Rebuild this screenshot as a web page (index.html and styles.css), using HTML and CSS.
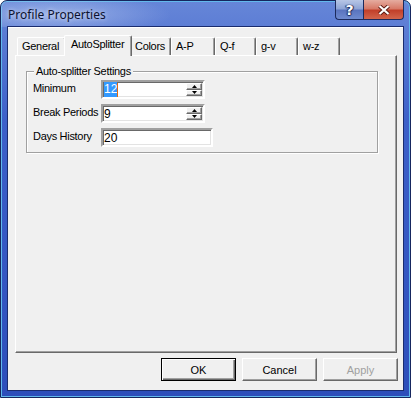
FILE: index.html
```html
<html>
  <head>
    <meta http-equiv="Content-Type" content="text/html; charset=utf-8" />
    <title>Profile Properties</title>
    <link rel="stylesheet" href="styles.css">
  </head>
  <body>
    <div class="window">
      <div class="titlebar">
        <span class="title">Profile Properties</span>
        <div class="capbuttons">
          <div class="capbtn help">?</div>
          <div class="capbtn close">
            <svg width="12" height="10" viewBox="0 0 12 10">
              <path d="M1.5 1 L10.5 9 M10.5 1 L1.5 9" stroke="#5a1a12" stroke-width="4" fill="none" />
              <path d="M1.5 1 L10.5 9 M10.5 1 L1.5 9" stroke="#fff" stroke-width="2.2" fill="none" />
            </svg>
          </div>
        </div>
      </div>
      <div class="client">
        <div class="tabs">
          <div class="tab t-general">General</div>
          <div class="tab t-auto selected">AutoSplitter</div>
          <div class="tab t-colors">Colors</div>
          <div class="tab t-ap">A-P</div>
          <div class="tab t-qf">Q-f</div>
          <div class="tab t-gv">g-v</div>
          <div class="tab t-wz">w-z</div>
        </div>
        <div class="panel">
          <fieldset class="group">
            <legend>Auto-splitter Settings</legend>
            <div class="row">
              <span class="lbl">Minimum</span>
              <div class="field spin">
                <span class="val"><span class="sel">12</span><span class="caret"></span></span>
                <div class="spinner">
                  <div class="sbtn"><svg width="5" height="3" viewBox="0 0 5 3"><polygon points="2.5,0 5,3 0,3" fill="#000" /></svg></div>
                  <div class="sbtn"><svg width="5" height="3" viewBox="0 0 5 3"><polygon points="0,0 5,0 2.5,3" fill="#000" /></svg></div>
                </div>
              </div>
            </div>
            <div class="row">
              <span class="lbl">Break Periods</span>
              <div class="field spin">
                <span class="val">9</span>
                <div class="spinner">
                  <div class="sbtn"><svg width="5" height="3" viewBox="0 0 5 3"><polygon points="2.5,0 5,3 0,3" fill="#000" /></svg></div>
                  <div class="sbtn"><svg width="5" height="3" viewBox="0 0 5 3"><polygon points="0,0 5,0 2.5,3" fill="#000" /></svg></div>
                </div>
              </div>
            </div>
            <div class="row">
              <span class="lbl">Days History</span>
              <div class="field plain">
                <span class="val">20</span>
              </div>
            </div>
          </fieldset>
        </div>
        <div class="buttons">
          <div class="button default">OK</div>
          <div class="button">Cancel</div>
          <div class="button disabled">Apply</div>
        </div>
      </div>
    </div>
  </body>
</html>
```

FILE: styles.css
```css
body {
    margin: 0;
    font-family: "Liberation Sans", Arial, sans-serif;
    font-size: 11px;
    background: #fff;
}

.window {
    width: 411px;
    height: 398px;
    box-sizing: border-box;
    display: flex;
    flex-direction: column;
    border: 1px solid #16265e;
    border-radius: 7px 7px 0 0;
    background: linear-gradient(180deg, #6686d8 0%, #3d60c9 30%, #3456c2 70%, #2d4eba 100%);
    box-shadow: inset 0 0 0 1px #62b8ec;
}

.titlebar {
    height: 26px;
    display: flex;
    justify-content: space-between;
    align-items: flex-start;
    background: radial-gradient(ellipse 120px 22px at 50px 14px, rgba(200, 215, 245, 0.55), rgba(200, 215, 245, 0));
    border-radius: 6px 6px 0 0;
}

.title {
    font-family: "Noto Sans", "Open Sans", sans-serif;
    font-size: 12px;
    color: #0c1230;
    margin: 5px 0 0 7px;
    text-shadow: 0 0 4px rgba(255, 255, 255, 0.7);
}

.capbuttons {
    display: flex;
    margin-right: 6px;
    margin-top: -1px;
}

.capbtn {
    height: 20px;
    box-sizing: border-box;
    display: flex;
    align-items: center;
    justify-content: center;
    border: 1px solid #1c2a5c;
    border-top: none;
}

.help {
    width: 28px;
    border-radius: 0 0 0 4px;
    border-right: none;
    background: linear-gradient(180deg, #b7c6e6 0%, #8fa5d6 45%, #5a74bf 55%, #6f8bd0 100%);
    color: #fff;
    font-family: "DejaVu Sans", sans-serif;
    font-weight: bold;
    font-size: 14px;
    text-shadow: 0 0 1px #1c2a5c, 1px 0 1px #1c2a5c, -1px 0 1px #1c2a5c, 0 1px 1px #1c2a5c;
}

.close {
    width: 41px;
    border-radius: 0 0 4px 0;
    background: linear-gradient(180deg, #e5aca0 0%, #d77a68 45%, #c2402a 55%, #d2654c 100%);
}

.client {
    flex: 1;
    margin: 0 7px 7px 7px;
    background: #f0f0f0;
    box-shadow: 0 0 0 1px #1a2c6e;
    border-top: 1px solid #fff;
    display: flex;
    flex-direction: column;
}

.tabs {
    display: flex;
    align-items: flex-start;
    height: 18px;
    margin-top: 9px;
    padding-left: 9px;
    position: relative;
    z-index: 1;
}

.tab {
    box-sizing: border-box;
    height: 18px;
    padding: 2px 0 0 4px;
    letter-spacing: -0.3px;
    background: #f0f0f0;
    border-top: 1px solid #fff;
    border-left: 1px solid #fff;
    border-right: 1px solid #696969;
    border-radius: 2px 2px 0 0;
    box-shadow: inset -1px 0 0 #a0a0a0;
    white-space: nowrap;
}

.t-general { width: 49px; }
.t-auto { width: 68px; }
.t-colors { width: 41px; }
.t-ap { width: 44px; }
.t-qf { width: 41px; }
.t-gv { width: 42px; }
.t-wz { width: 42px; }

.tab.selected {
    height: 21px;
    margin: -2px -2px 0 -2px;
    padding-left: 6px;
    position: relative;
    z-index: 2;
}

.panel {
    box-sizing: border-box;
    width: 382px;
    height: 298px;
    margin-left: 7px;
    border: 1px solid;
    border-color: #fff #696969 #696969 #fff;
    box-shadow: inset -1px -1px 0 #a0a0a0;
}

.group {
    box-sizing: border-box;
    width: 352px;
    margin: 9px 0 0 10px;
    padding: 2px 0 5px 6px;
    border: 1px solid #a0a0a0;
    box-shadow: 1px 1px 0 #fff, inset 1px 1px 0 #fff;
}

.group legend {
    padding: 0 2px;
    margin-left: 1px;
    line-height: 13px;
    letter-spacing: -0.3px;
    background: #f0f0f0;
}

.row {
    display: flex;
    align-items: flex-start;
    height: 19px;
    margin-bottom: 5px;
}

.row:last-child {
    margin-bottom: 0;
}

.lbl {
    width: 68px;
    flex: none;
    white-space: nowrap;
    letter-spacing: -0.3px;
    padding-top: 2px;
}

.field {
    box-sizing: border-box;
    height: 19px;
    display: flex;
    background: #fff;
    border: 2px solid;
    border-color: #a0a0a0 #fff #fff #a0a0a0;
    box-shadow: inset 1px 1px 0 #696969, inset -1px -1px 0 #e3e3e3;
}

.spin { width: 104px; }
.plain { width: 112px; }

.val {
    flex: 1;
    display: flex;
    align-items: center;
    padding-left: 1px;
    font-size: 12px;
}

.sel {
    background: #3399ff;
    color: #fff;
    padding: 1px 0;
    line-height: 13px;
}

.caret {
    width: 1px;
    height: 14px;
    background: #e06a10;
}

.spinner {
    width: 16px;
    display: flex;
    flex-direction: column;
    padding: 1px 1px 1px 0;
}

.sbtn {
    flex: 1;
    display: flex;
    align-items: center;
    justify-content: center;
    background: #f0f0f0;
    border: 1px solid;
    border-color: #fff #696969 #696969 #fff;
    box-shadow: inset -1px -1px 0 #a0a0a0;
}

.buttons {
    display: flex;
    justify-content: flex-end;
    gap: 6px;
    margin: 5px 5px 0 0;
}

.button {
    box-sizing: border-box;
    width: 75px;
    height: 23px;
    display: flex;
    align-items: center;
    justify-content: center;
    background: #f0f0f0;
    border: 1px solid;
    border-color: #fff #696969 #696969 #fff;
    box-shadow: inset -1px -1px 0 #a0a0a0;
}

.default {
    border-color: #000;
    box-shadow: inset 1px 1px 0 #fff, inset -1px -1px 0 #696969, inset -2px -2px 0 #a0a0a0;
}

.disabled {
    color: #a0a0a0;
}
```
